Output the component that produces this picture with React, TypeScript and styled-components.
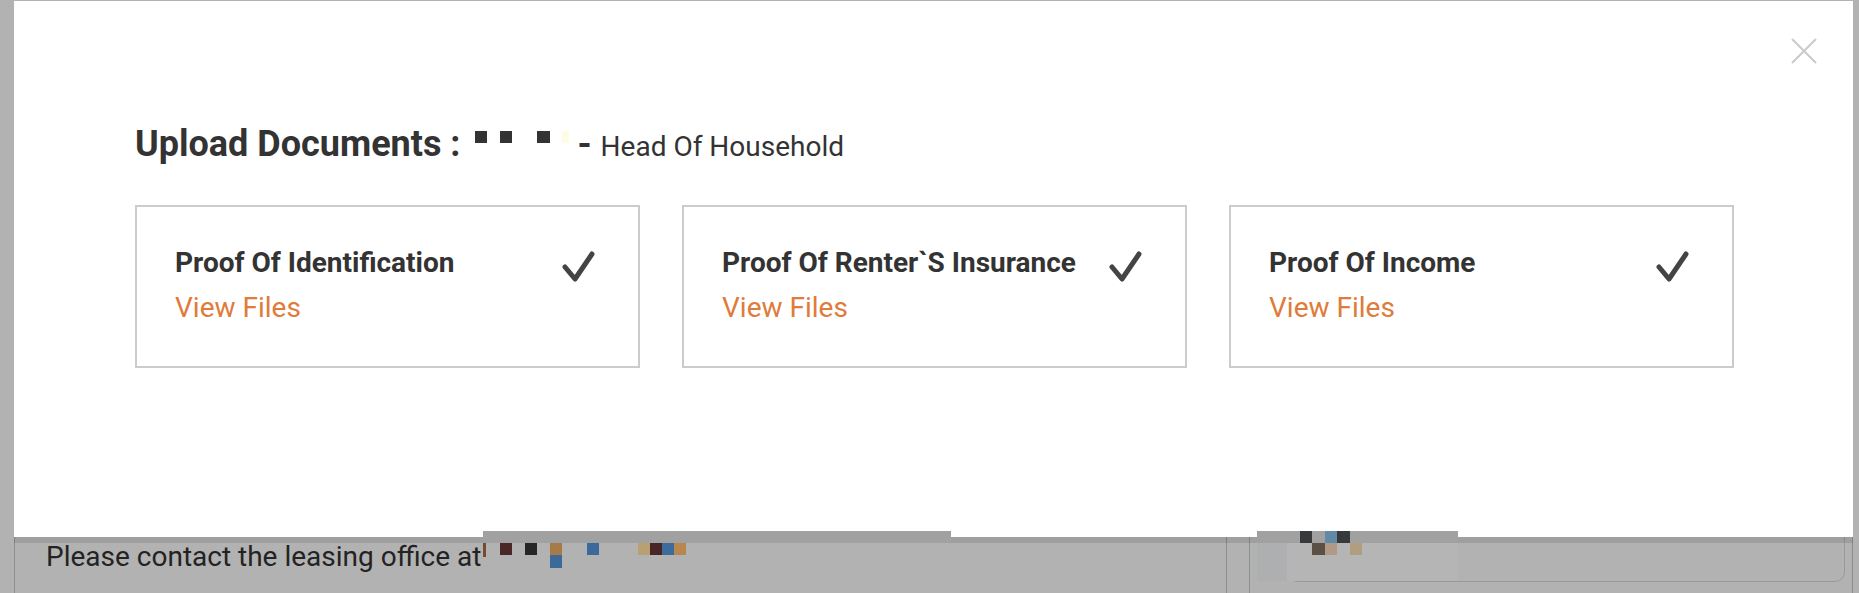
import React from "react";
import styled, { createGlobalStyle } from "styled-components";

const GlobalStyle = createGlobalStyle`
    html, body {
        margin: 0;
        padding: 0;
    }
    body {
        font-family: Roboto, "Liberation Sans", Arial, sans-serif;
        background: #fff;
        overflow: hidden;
    }
    * {
        box-sizing: border-box;
    }
`;

const Page = styled.div`
    position: relative;
    width: 1859px;
    height: 593px;
    overflow: hidden;
    background: #fff;
    color: #333;
`;

// page content sitting behind the dialog
const PanelRow = styled.div`
    display: flex;
    gap: 22px;
    padding: 500px 6px 0 14px;
`;

const LeftPanel = styled.div`
    width: 1213px;
    height: 200px;
    border: 1px solid #ccc;
    padding: 39px 31px 0;
    font-size: 28px;
    line-height: 33px;
    color: #333;
`;

const RightPanel = styled.div`
    flex: 1;
    height: 200px;
    border: 1px solid #ccc;
    padding: 20px 7px 0 37px;
`;

const InfoBox = styled.div`
    height: 61px;
    border: 1px solid #dcdcdc;
    border-radius: 10px;
`;

const Backdrop = styled.div`
    position: absolute;
    inset: 0;
    background: rgba(0, 0, 0, 0.3);
`;

const Modal = styled.div`
    position: absolute;
    left: 14px;
    top: 1px;
    width: 1839px;
    height: 536px;
    background: #fff;
    box-shadow: 0 6px 0 rgba(0, 0, 0, 0.1);
    padding: 37px 36px 0;
`;

const CloseRow = styled.div`
    display: flex;
    justify-content: flex-end;
    height: 26px;
`;

const CloseButton = styled.button`
    display: block;
    width: 26px;
    height: 26px;
    padding: 0;
    border: 0;
    background: none;
    cursor: pointer;
`;

const ModalBody = styled.div`
    padding: 59px 83px 0 85px;
`;

const Heading = styled.h2`
    display: flex;
    align-items: baseline;
    height: 42px;
    margin: 0;
    font-size: 36px;
    font-weight: 700;
    line-height: 42px;
    color: #333;
    white-space: pre;
`;

const NamePixels = styled.svg`
    flex: none;
    align-self: flex-start;
    margin: 8px 0 0 14px;
`;

const Role = styled.span`
    font-size: 28px;
    font-weight: 400;
`;

const CardGrid = styled.div`
    display: grid;
    grid-template-columns: repeat(3, 1fr);
    gap: 42px;
    margin-top: 40px;
`;

const Card = styled.div`
    height: 163px;
    border: 2px solid #ccc;
    padding: 40px 43px 0 38px;
    display: flex;
    justify-content: space-between;
    align-items: flex-start;
`;

const CardTitle = styled.div`
    font-size: 28px;
    font-weight: 700;
    line-height: 32px;
    color: #333;
`;

const ViewLink = styled.a`
    display: block;
    margin-top: 13px;
    font-size: 28px;
    line-height: 32px;
    color: #e07b39;
    text-decoration: none;
`;

const Check = styled.svg`
    flex: none;
    margin-top: 4px;
`;

const Redaction = styled.svg<{ $left: number; $top: number }>`
    position: absolute;
    left: ${(p) => p.$left}px;
    top: ${(p) => p.$top}px;
`;

const documents = ["Proof Of Identification", "Proof Of Renter`S Insurance", "Proof Of Income"];

const CheckIcon = () => (
    <Check width="34" height="32" viewBox="0 0 34 32">
        <polyline
            points="4,16 14,28 31,3"
            fill="none"
            stroke="#444"
            strokeWidth="5"
            strokeLinecap="round"
            strokeLinejoin="round"
        />
    </Check>
);

const App: React.FC = () => {
    return (
        <Page>
            <GlobalStyle />
            <PanelRow>
                <LeftPanel>Please contact the leasing office at</LeftPanel>
                <RightPanel>
                    <InfoBox />
                </RightPanel>
            </PanelRow>
            <Backdrop />
            <Modal>
                <CloseRow>
                    <CloseButton type="button" aria-label="Close">
                        <svg width="26" height="26" viewBox="0 0 26 26">
                            <path d="M1 1 L25 25 M25 1 L1 25" stroke="#cacaca" strokeWidth="2" fill="none" />
                        </svg>
                    </CloseButton>
                </CloseRow>
                <ModalBody>
                    <Heading>
                        <span>Upload Documents :</span>
                        <NamePixels width="94" height="12" viewBox="0 0 94 12">
                            <rect x="0" y="0" width="12" height="12" fill="#333" />
                            <rect x="25" y="0" width="12" height="12" fill="#333" />
                            <rect x="62" y="0" width="13" height="12" fill="#333" />
                            <rect x="87" y="0" width="7" height="12" fill="#fffce6" />
                        </NamePixels>
                        <span>{" - "}</span>
                        <Role>Head Of Household</Role>
                    </Heading>
                    <CardGrid>
                        {documents.map((doc) => (
                            <Card key={doc}>
                                <div>
                                    <CardTitle>{doc}</CardTitle>
                                    <ViewLink href="#">View Files</ViewLink>
                                </div>
                                <CheckIcon />
                            </Card>
                        ))}
                    </CardGrid>
                </ModalBody>
            </Modal>
            <Redaction $left={483} $top={531} width="468" height="37" viewBox="0 0 468 37">
                <rect x="0" y="0" width="468" height="12" fill="#a1a1a1" />
                <rect x="0" y="12" width="3" height="14" fill="#7b4a2e" />
                <rect x="17" y="12" width="12" height="12" fill="#4a2828" />
                <rect x="42" y="12" width="12" height="12" fill="#262626" />
                <rect x="67" y="12" width="12" height="12" fill="#a87a48" />
                <rect x="67" y="24" width="12" height="13" fill="#3b6a9a" />
                <rect x="104" y="12" width="12" height="12" fill="#3b6a9a" />
                <rect x="155" y="12" width="12" height="12" fill="#b9a072" />
                <rect x="167" y="12" width="12" height="12" fill="#4a2525" />
                <rect x="179" y="12" width="12" height="12" fill="#3d6b9b" />
                <rect x="191" y="12" width="12" height="12" fill="#b8874f" />
            </Redaction>
            <Redaction $left={1257} $top={531} width="201" height="50" viewBox="0 0 201 50">
                <rect x="0" y="0" width="201" height="12" fill="#a1a1a1" />
                <rect x="0" y="12" width="30" height="38" fill="#aeafb1" />
                <rect x="30" y="12" width="171" height="38" fill="#b5b5b5" />
                <rect x="43" y="0" width="12" height="12" fill="#38393b" />
                <rect x="68" y="0" width="12" height="12" fill="#6189a8" />
                <rect x="80" y="0" width="13" height="12" fill="#38393b" />
                <rect x="55" y="12" width="13" height="12" fill="#5a5045" />
                <rect x="68" y="12" width="12" height="12" fill="#b09a85" />
                <rect x="93" y="12" width="12" height="12" fill="#b09e7e" />
            </Redaction>
        </Page>
    );
};

export default App;
